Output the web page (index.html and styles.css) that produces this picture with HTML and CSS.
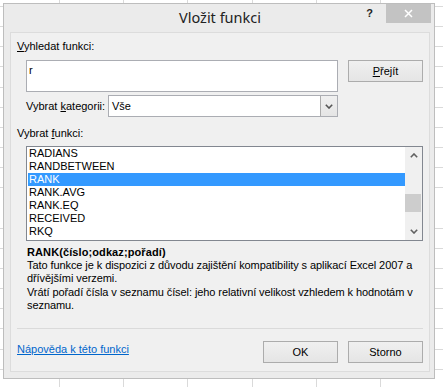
FILE: index.html
```html
<!DOCTYPE html>
<html lang="cs">
<head>
<meta charset="utf-8">
<title>Vložit funkci</title>
<link rel="stylesheet" href="styles.css">
</head>
<body>
<div class="dialog">
  <div class="titlebar">
    <span class="tb-spacer"></span>
    <div class="title">Vložit funkci</div>
    <div class="controls">
      <span class="help">?</span>
      <span class="close"><svg width="9" height="9" viewBox="0 0 9 9"><path d="M1 1L8 8M8 1L1 8" stroke="#fff" stroke-width="1.5" fill="none"/></svg></span>
    </div>
  </div>
  <div class="panel">
    <div class="lbl lbl-search"><u>V</u>yhledat funkci:</div>
    <div class="search-row">
      <div class="search-box">r</div>
      <button class="btn"><u>P</u>řejít</button>
    </div>
    <div class="cat-row">
      <span class="cat-label">Vybrat <u>k</u>ategorii:</span>
      <div class="combo">
        <span class="combo-value">Vše</span>
        <span class="combo-btn"><svg width="8" height="5" viewBox="0 0 8 5"><path d="M0.8 0.8L4 4L7.2 0.8" stroke="#555" stroke-width="1.6" fill="none"/></svg></span>
      </div>
    </div>
    <div class="lbl lbl-fn">Vybrat <u>f</u>unkci:</div>
    <div class="listbox">
      <ul class="items">
        <li>RADIANS</li>
        <li>RANDBETWEEN</li>
        <li class="selected">RANK</li>
        <li>RANK.AVG</li>
        <li>RANK.EQ</li>
        <li>RECEIVED</li>
        <li>RKQ</li>
      </ul>
      <div class="scrollbar">
        <span class="sb-arrow"><svg width="8" height="5" viewBox="0 0 8 5"><path d="M0.8 4.2L4 1L7.2 4.2" stroke="#606060" stroke-width="1.6" fill="none"/></svg></span>
        <div class="sb-track"><div class="sb-thumb"></div></div>
        <span class="sb-arrow"><svg width="8" height="5" viewBox="0 0 8 5"><path d="M0.8 0.8L4 4L7.2 0.8" stroke="#606060" stroke-width="1.6" fill="none"/></svg></span>
      </div>
    </div>
    <div class="syntax">RANK(číslo;odkaz;pořadí)</div>
    <p class="desc">Tato funkce je k dispozici z důvodu zajištění kompatibility s aplikací Excel 2007 a<br>dřívějšími verzemi.</p>
    <p class="desc">Vrátí pořadí čísla v seznamu čísel: jeho relativní velikost vzhledem k hodnotám v<br>seznamu.</p>
    <div class="sep"></div>
    <div class="footer">
      <a class="help-link" href="#">Nápověda k této funkci</a>
      <div class="buttons">
        <button class="btn">OK</button>
        <button class="btn">Storno</button>
      </div>
    </div>
  </div>
</div>
</body>
</html>
```
FILE: styles.css
```css
* { box-sizing: border-box; }
html, body { margin: 0; }
body {
  width: 443px;
  height: 387px;
  overflow: hidden;
  padding: 3px 0 0 3px;
  background-color: #fff;
  background-image:
    repeating-linear-gradient(to right, transparent 0 59px, #dadada 59px 60px, transparent 60px 64.2px),
    repeating-linear-gradient(to bottom, transparent 0 6px, #dadada 6px 7px, transparent 7px 20.15px);
  font-family: "Liberation Sans", Arial, sans-serif;
  font-size: 11px;
  line-height: 13px;
  color: #000;
}
.dialog {
  width: 432px;
  height: 376px;
  border: 1px solid #bdbdbd;
  background: #ebebeb;
  display: flex;
  flex-direction: column;
}
.titlebar {
  height: 28px;
  display: grid;
  grid-template-columns: 1fr auto 1fr;
}
.title {
  font-family: "Noto Sans", sans-serif;
  font-size: 14.5px;
  line-height: 26px;
  color: #222;
  padding-left: 2px;
}
.controls {
  justify-self: end;
  display: flex;
  align-items: flex-start;
}
.help {
  font-weight: bold;
  font-size: 11px;
  line-height: 13px;
  margin-top: 3px;
  margin-right: 13px;
  color: #222;
}
.close {
  width: 45px;
  height: 19px;
  margin-right: 3px;
  background: #c3c3c3;
  display: flex;
  align-items: center;
  justify-content: center;
}
.close svg { display: block; }
.panel {
  margin: 0 0 6px 6px;
  width: 420px;
  height: 340px;
  border: 1px solid #dcdcdc;
  background: #f0f0f0;
  padding: 0 6px 8px 6px;
  display: flex;
  flex-direction: column;
}
.lbl-search { margin-top: 7px; }
.search-row {
  margin-top: 7px;
  display: flex;
  align-items: flex-start;
  gap: 10px;
  padding-left: 9px;
}
.search-box {
  width: 312px;
  height: 32px;
  border: 1px solid #abadb3;
  background: #fff;
  padding: 3px 2px;
}
.btn {
  width: 75px;
  height: 22px;
  border: 1px solid #acacac;
  background: linear-gradient(#f0f0f0, #e5e5e5);
  font-family: "Liberation Sans", Arial, sans-serif;
  font-size: 11px;
  line-height: 13px;
  color: #000;
  padding: 0;
  margin: 0;
}
.cat-row {
  margin-top: 3px;
  display: flex;
  align-items: center;
  padding-left: 9px;
}
.cat-label { width: 82px; }
.combo {
  width: 230px;
  height: 22px;
  border: 1px solid #abadb3;
  background: #fff;
  display: flex;
  justify-content: space-between;
}
.combo-value { padding-left: 3px; line-height: 20px; }
.combo-btn {
  width: 17px;
  height: 20px;
  border-left: 1px solid #acacac;
  background: linear-gradient(#f0f0f0, #e5e5e5);
  display: flex;
  align-items: center;
  justify-content: center;
}
.combo-btn svg, .sb-arrow svg { display: block; }
.lbl-fn { margin-top: 10px; }
.listbox {
  margin-top: 6px;
  margin-left: 9px;
  height: 95px;
  border: 1px solid #828790;
  background: #fff;
  display: flex;
  padding-left: 1px;
}
.items {
  flex: 1;
  list-style: none;
  margin: 0;
  padding: 0;
}
.items li {
  height: 13px;
  line-height: 13px;
  padding-left: 1px;
  white-space: nowrap;
}
.items li.selected { background: #3399ff; color: #fff; }
.scrollbar {
  width: 17px;
  background: #f0f0f0;
  display: flex;
  flex-direction: column;
}
.sb-arrow {
  height: 17px;
  display: flex;
  align-items: center;
  justify-content: center;
}
.sb-track { flex: 1; padding-top: 30px; }
.sb-thumb { height: 18px; margin-right: 1px; background: #cdcdcd; }
.syntax {
  margin-top: 5px;
  margin-left: 10px;
  font-weight: bold;
  letter-spacing: 0.1px;
}
.desc {
  margin: 0 0 0 10px;
  line-height: 13.3px;
  letter-spacing: -0.08px;
  white-space: nowrap;
}
.sep {
  margin-top: auto;
  margin-bottom: 12px;
  height: 1px;
  background: #dadada;
}
.footer {
  display: flex;
  justify-content: space-between;
  align-items: flex-start;
}
.help-link {
  margin-top: 2px;
  color: #0066cc;
  text-decoration: underline;
}
.buttons { display: flex; gap: 10px; }
```
